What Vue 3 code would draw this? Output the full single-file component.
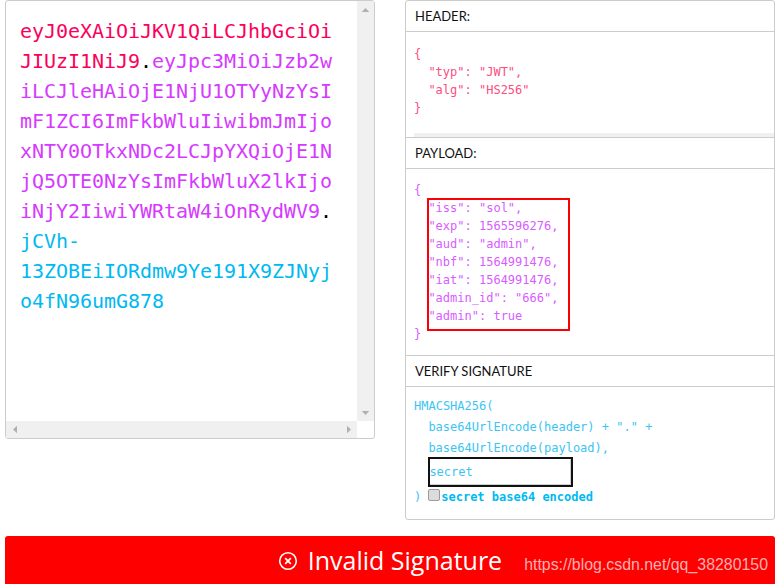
<script setup>
const payload = [
  ['"iss"', '"sol"', ','],
  ['"exp"', '1565596276', ','],
  ['"aud"', '"admin"', ','],
  ['"nbf"', '1564991476', ','],
  ['"iat"', '1564991476', ','],
  ['"admin_id"', '"666"', ','],
  ['"admin"', 'true', ''],
]
</script>

<template>
  <div class="page">
    <div class="columns">
      <div class="encoded">
        <div class="token"><span class="red">eyJ0eXAiOiJKV1QiLCJhbGciOiJIUzI1NiJ9</span><span class="dot">.</span><span class="purple">eyJpc3MiOiJzb2wiLCJleHAiOjE1NjU1OTYyNzYsImF1ZCI6ImFkbWluIiwibmJmIjoxNTY0OTkxNDc2LCJpYXQiOjE1NjQ5OTE0NzYsImFkbWluX2lkIjoiNjY2IiwiYWRtaW4iOnRydWV9</span><span class="dot">.</span><br /><span class="blue">jCVh-<br />13ZOBEiIORdmw9Ye191X9ZJNyjo4fN96umG878</span></div>
        <div class="vbar">
          <svg width="17" height="17" viewBox="0 0 17 17"><path d="M4.75 11 L8.5 7 L12.25 11 Z" fill="#b0b0b0" /></svg>
          <svg width="17" height="17" viewBox="0 0 17 17"><path d="M4.75 7 L8.5 11 L12.25 7 Z" fill="#b0b0b0" /></svg>
        </div>
        <div class="hbar">
          <svg width="17" height="17" viewBox="0 0 17 17"><path d="M11 4.75 L7 8.5 L11 12.25 Z" fill="#b0b0b0" /></svg>
          <svg width="17" height="17" viewBox="0 0 17 17"><path d="M7 4.75 L11 8.5 L7 12.25 Z" fill="#b0b0b0" /></svg>
        </div>
      </div>

      <div class="decoded">
        <div class="label">HEADER:</div>
        <div class="json header-body red-soft">
          <div>{</div>
          <div class="indent">"typ": "JWT",</div>
          <div class="indent">"alg": "HS256"</div>
          <div>}</div>
          <div class="hscroll"></div>
        </div>
        <div class="label">PAYLOAD:</div>
        <div class="json payload-body purple-soft">
          <div>{</div>
          <div v-for="row in payload" :key="row[0]" class="indent">{{ row[0] }}: {{ row[1] }}{{ row[2] }}</div>
          <div>}</div>
          <div class="highlight"></div>
        </div>
        <div class="label">VERIFY SIGNATURE</div>
        <div class="signature blue-soft">
          <div class="sig-line">HMACSHA256(</div>
          <div class="sig-line indent">base64UrlEncode(header) + "." +</div>
          <div class="sig-line indent">base64UrlEncode(payload),</div>
          <div class="indent secret-row"><input class="secret" value="secret" /></div>
          <div class="check-row">
            <span>)</span>
            <input class="check" type="checkbox" />
            <b>secret base64 encoded</b>
          </div>
        </div>
      </div>
    </div>

    <div class="status">
      <svg class="status-icon" width="20" height="20" viewBox="0 0 20 20">
        <circle cx="10" cy="10" r="8.3" fill="none" stroke="#fff" stroke-width="1.6" />
        <path d="M7.2 7.2 L12.8 12.8 M12.8 7.2 L7.2 12.8" stroke="#fff" stroke-width="1.8" />
      </svg>
      <span class="status-text">Invalid Signature</span>
      <span class="mark">https://blog.csdn.net/qq_38280150</span>
    </div>
  </div>
</template>

<style>
html, body { margin: 0; background: #fff; overflow: hidden; }
</style>

<style scoped>
.page {
  width: 778px;
  height: 584px;
  overflow: hidden;
  background: #fff;
  box-sizing: border-box;
  padding: 0 3px 0 5px;
  display: flex;
  flex-direction: column;
}
.columns {
  height: 536px;
  flex: none;
  display: grid;
  grid-template-columns: 370px 370px;
  column-gap: 30px;
  align-items: start;
}
.encoded {
  height: 439px;
  box-sizing: border-box;
  border: 1px solid #cccccc;
  border-radius: 3px;
  display: grid;
  grid-template-columns: 351px 17px;
  grid-template-rows: 420px 17px;
}
.token {
  box-sizing: border-box;
  padding: 15px 14px;
  font: 20px/30px "DejaVu Sans Mono", monospace;
  letter-spacing: -0.04px;
  word-break: break-all;
  overflow: hidden;
}
.red { color: #fb015b; }
.purple { color: #d63aff; }
.blue { color: #00b9f1; }
.dot { color: #000; }
.vbar {
  background: #f0f0f0;
  display: flex;
  flex-direction: column;
  justify-content: space-between;
}
.hbar {
  background: #f0f0f0;
  display: flex;
  justify-content: space-between;
  grid-column: 1;
}
.vbar svg, .hbar svg { display: block; }

.decoded {
  height: 520px;
  box-sizing: border-box;
  border: 1px solid #cccccc;
  border-radius: 3px;
}
.label {
  height: 31px;
  box-sizing: border-box;
  padding: 7px 9px 0;
  font: 13px/16px Lato, "Open Sans", sans-serif;
  color: #111;
  border-bottom: 1px solid #cccccc;
}
.json {
  position: relative;
  box-sizing: border-box;
  padding: 13px 8px 0;
  font: 12px/18px "DejaVu Sans Mono", monospace;
  border-bottom: 1px solid #cccccc;
}
.indent { padding-left: 14.4px; }
.header-body { height: 106px; }
.payload-body { height: 187px; padding-top: 12px; }
.hscroll {
  position: absolute;
  left: 8px;
  right: 0;
  bottom: 0;
  height: 4px;
  background: #f0f0f0;
}
.highlight {
  position: absolute;
  left: 21px;
  top: 29px;
  width: 143px;
  height: 133px;
  box-sizing: border-box;
  border: 2px solid #fb0007;
}
.red-soft { color: #fb4e7f; }
.purple-soft { color: #d85cff; }
.blue-soft { color: #3cc4f2; }
.signature {
  padding: 9px 8px 0;
  font: 12px/21px "DejaVu Sans Mono", monospace;
}
.secret-row { height: 30px; margin-top: -2px; }
.secret {
  display: block;
  width: 145px;
  height: 30px;
  box-sizing: border-box;
  margin: 0;
  padding: 0 0 0 1px;
  border: 0;
  box-shadow: inset 0 0 0 2px #111, inset -3px -3px 0 #cfcfcf;
  outline: none;
  background: #fff;
  color: #3cc4f2;
  font: 12px "DejaVu Sans Mono", monospace;
}
.check-row {
  display: flex;
  align-items: center;
  height: 21px;
}
.check-row b { color: #00b9f1; font-weight: 700; }
.check {
  appearance: none;
  width: 12px;
  height: 12px;
  margin: -6px 1px 0 7px;
  box-sizing: border-box;
  border: 1px solid #9a9a9a;
  border-radius: 2px;
  background: #dcdcdc;
}

.status {
  height: 48px;
  flex: none;
  background: #ff0000;
  border-radius: 3px 3px 0 0;
  display: flex;
  align-items: center;
  justify-content: flex-end;
  padding-right: 7px;
  color: #fff;
}
.status-icon { margin: 2px 10px 0 0; }
.status-text {
  font: 25px/48px "Open Sans", sans-serif;
  margin-right: 22px;
}
.mark {
  font: 15.9px/48px "Liberation Sans", sans-serif;
  color: #f7b0b0;
  position: relative;
  top: 5px;
}
</style>
